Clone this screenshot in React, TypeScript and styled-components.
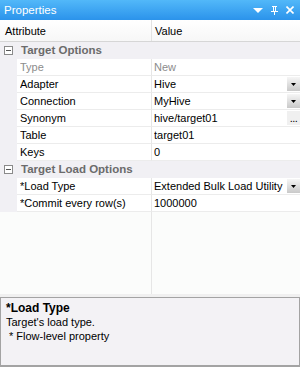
import styled, {createGlobalStyle} from "styled-components";

const GlobalStyle = createGlobalStyle`
	html, body {
		margin: 0;
		padding: 0;
		background: #f0f0f0;
	}
	body {
		font-family: "Liberation Sans", Arial, sans-serif;
		font-size: 11px;
		color: #000000;
	}
`

const Window = styled.div`
	width: 300px;
	height: 367px;
	display: flex;
	flex-direction: column;
	background: #f0f0f0;
	overflow: hidden;
`
const TitleBar = styled.div`
	flex: none;
	height: 20px;
	display: flex;
	align-items: center;
	padding: 0 2px 0 4px;
	background: linear-gradient(#52b8f9, #2b93eb);
	color: #ffffff;
	font-size: 11.5px;
`
const Title = styled.div`
	flex: 1;
`
const TitleButton = styled.div`
	width: 16px;
	height: 20px;
	display: flex;
	align-items: center;
	justify-content: center;
`
const Grid = styled.div`
	flex: 1;
	display: flex;
	flex-direction: column;
	background: #fbfcfb;
`
const Header = styled.div`
	flex: none;
	height: 21px;
	display: grid;
	grid-template-columns: 151px 1fr;
	background: linear-gradient(#ffffff, #f7f7f7);
	border-bottom: 1px solid #d6d6d6;
`
const HeaderCell = styled.div<{divider?: boolean}>`
	display: flex;
	align-items: center;
	padding-left: ${props => props.divider ? 3 : 5}px;
	border-left: ${props => props.divider ? "1px solid #e2e2e2" : "none"};
`
const CategoryRow = styled.div`
	flex: none;
	height: 16px;
	display: flex;
	align-items: center;
	gap: 8px;
	padding-left: 4px;
	background: #f1f0f4;
	border-bottom: 1px solid #f1f0f4;
	font-size: 11.5px;
	font-weight: 700;
	color: #6b6b6b;
`
const Row = styled.div`
	flex: none;
	height: 17px;
	display: grid;
	grid-template-columns: 17px 134px 1fr;
`
const Gutter = styled.div`
	background: #f1f0f4;
`
const Cell = styled.div<{disabled?: boolean; value?: boolean}>`
	display: flex;
	align-items: center;
	min-width: 0;
	padding-left: ${props => props.value ? 2 : 3}px;
	background: #ffffff;
	border-bottom: 1px solid #ececec;
	border-left: ${props => props.value ? "1px solid #e6e6e6" : "none"};
	color: ${props => props.disabled ? "#8c8c8c" : "#000000"};
	white-space: nowrap;
`
const CellText = styled.span`
	flex: 1;
	overflow: hidden;
`
const DropButton = styled.div<{ellipsis?: boolean}>`
	flex: none;
	width: 13px;
	height: 14px;
	display: flex;
	align-items: center;
	justify-content: center;
	background: ${props => props.ellipsis ? "#f0f0f0" : "linear-gradient(#f6f6f6, #c9c9c9)"};
	font-size: 11px;
	line-height: 10px;
	letter-spacing: -0.5px;
`
const Filler = styled.div`
	flex: 1;
	display: grid;
	grid-template-columns: 151px 1fr;
`
const FillerValue = styled.div`
	border-left: 1px solid #e6e6e6;
`
const Description = styled.div`
	flex: none;
	height: 70px;
	margin-top: 3px;
	box-sizing: border-box;
	padding: 3px 5px;
	background: #f3f2f5;
	border: 1px solid #a3a3a3;
	border-bottom-width: 2px;
	line-height: 14px;
`
const DescTitle = styled.div`
	font-size: 12px;
	font-weight: 700;
`
const DescLine = styled.div<{indent?: boolean}>`
	padding-left: ${props => props.indent ? 3 : 0}px;
`

const Minus = () => (
	<svg width="9" height="9" viewBox="0 0 9 9">
		<rect x="0.5" y="0.5" width="8" height="8" fill="#ffffff" stroke="#8a8a8a"/>
		<line x1="2" y1="4.5" x2="7" y2="4.5" stroke="#555555"/>
	</svg>
)

const Arrow = () => (
	<svg width="5" height="3" viewBox="0 0 5 3">
		<path d="M0 0h5L2.5 3z" fill="#000000"/>
	</svg>
)

type Prop = {
	name: string
	value: string
	disabled?: boolean
	button?: "drop" | "more"
}

const targetOptions: Prop[] = [
	{name: "Type", value: "New", disabled: true},
	{name: "Adapter", value: "Hive", button: "drop"},
	{name: "Connection", value: "MyHive", button: "drop"},
	{name: "Synonym", value: "hive/target01", button: "more"},
	{name: "Table", value: "target01"},
	{name: "Keys", value: "0"},
]

const loadOptions: Prop[] = [
	{name: "*Load Type", value: "Extended Bulk Load Utility", button: "drop"},
	{name: "*Commit every row(s)", value: "1000000"},
]

const PropRow = ({prop}: {prop: Prop}) => (
	<Row>
		<Gutter/>
		<Cell disabled={prop.disabled}>
			<CellText>{prop.name}</CellText>
		</Cell>
		<Cell value disabled={prop.disabled}>
			<CellText>{prop.value}</CellText>
			{prop.button === "drop" && <DropButton><Arrow/></DropButton>}
			{prop.button === "more" && <DropButton ellipsis>...</DropButton>}
		</Cell>
	</Row>
)

export default function App() {
	return (
		<Window>
			<GlobalStyle/>
			<TitleBar>
				<Title>Properties</Title>
				<TitleButton>
					<svg width="10" height="5" viewBox="0 0 10 5">
						<path d="M0 0h10L5 5z" fill="#ffffff"/>
					</svg>
				</TitleButton>
				<TitleButton>
					<svg width="7" height="9" viewBox="0 0 7 9">
						<path d="M1 0h5v1H5v4h2v1H4v3H3V6H0V5h2V1H1z M3 1v4h1V1z" fill="#ffffff" fillRule="evenodd"/>
					</svg>
				</TitleButton>
				<TitleButton>
					<svg width="8" height="8" viewBox="0 0 8 8">
						<path d="M0.5 0.5l7 7M7.5 0.5l-7 7" stroke="#ffffff" strokeWidth="1.6"/>
					</svg>
				</TitleButton>
			</TitleBar>
			<Grid>
				<Header>
					<HeaderCell>Attribute</HeaderCell>
					<HeaderCell divider>Value</HeaderCell>
				</Header>
				<CategoryRow><Minus/>Target Options</CategoryRow>
				{targetOptions.map(p => <PropRow key={p.name} prop={p}/>)}
				<CategoryRow><Minus/>Target Load Options</CategoryRow>
				{loadOptions.map(p => <PropRow key={p.name} prop={p}/>)}
				<Filler>
					<div/>
					<FillerValue/>
				</Filler>
			</Grid>
			<Description>
				<DescTitle>*Load Type</DescTitle>
				<DescLine>Target's load type.</DescLine>
				<DescLine indent>* Flow-level property</DescLine>
			</Description>
		</Window>
	)
}
